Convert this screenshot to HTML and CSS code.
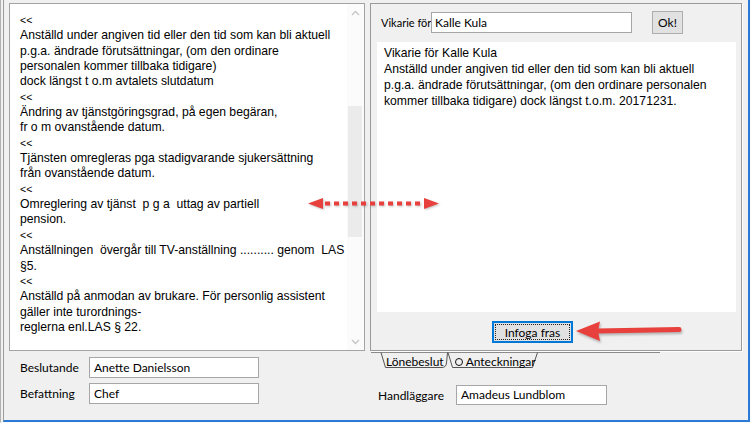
FILE: index.html
```html
<!DOCTYPE html>
<html lang="sv">
<head>
<meta charset="utf-8">
<title>Fraser</title>
<link rel="stylesheet" href="styles.css">
</head>
<body>
<div class="window">
  <div class="inner">
    <div class="cols">
      <div class="col col-left">
        <div class="editor">
          <div class="editor-text">
            <div class="ln mark">&lt;&lt;</div>
            <div class="ln">Anställd under angiven tid eller den tid som kan bli aktuell</div>
            <div class="ln">p.g.a. ändrade förutsättningar, (om den ordinare</div>
            <div class="ln">personalen kommer tillbaka tidigare)</div>
            <div class="ln">dock längst t o.m avtalets slutdatum</div>
            <div class="ln mark">&lt;&lt;</div>
            <div class="ln">Ändring av tjänstgöringsgrad, på egen begäran,</div>
            <div class="ln">fr o m ovanstående datum.</div>
            <div class="ln mark">&lt;&lt;</div>
            <div class="ln">Tjänsten omregleras pga stadigvarande sjukersättning</div>
            <div class="ln">från ovanstående datum.</div>
            <div class="ln mark">&lt;&lt;</div>
            <div class="ln">Omreglering av tjänst  p g a  uttag av partiell</div>
            <div class="ln">pension.</div>
            <div class="ln mark">&lt;&lt;</div>
            <div class="ln">Anställningen  övergår till TV-anställning .......... genom  LAS</div>
            <div class="ln">§5.</div>
            <div class="ln mark">&lt;&lt;</div>
            <div class="ln">Anställd på anmodan av brukare. För personlig assistent</div>
            <div class="ln">gäller inte turordnings-</div>
            <div class="ln">reglerna enl.LAS § 22.</div>
          </div>
          <div class="scrollbar">
            <div class="sb-btn">
              <svg width="9" height="6" viewBox="0 0 9 6"><path d="M1 5 L4.5 1.5 L8 5" fill="none" stroke="#c4c4c4" stroke-width="1.3"/></svg>
            </div>
            <div class="sb-track"><div class="sb-thumb"></div></div>
            <div class="sb-btn">
              <svg width="9" height="6" viewBox="0 0 9 6"><path d="M1 1 L4.5 4.5 L8 1" fill="none" stroke="#c4c4c4" stroke-width="1.3"/></svg>
            </div>
          </div>
        </div>
        <div class="fields">
          <div class="field">
            <span class="label lbl-left">Beslutande</span>
            <div class="input in-left">Anette Danielsson</div>
          </div>
          <div class="field">
            <span class="label lbl-left">Befattning</span>
            <div class="input in-left">Chef</div>
          </div>
        </div>
      </div>

      <div class="col col-right">
        <div class="page">
          <div class="topbar">
            <span class="label small">Vikarie för</span>
            <div class="input in-vik">Kalle Kula</div>
            <div class="btn btn-ok">Ok!</div>
          </div>
          <div class="preview">
            <div class="ln2">Vikarie för Kalle Kula</div>
            <div class="ln2">Anställd under angiven tid eller den tid som kan bli aktuell</div>
            <div class="ln2">p.g.a. ändrade förutsättningar, (om den ordinare personalen</div>
            <div class="ln2">kommer tillbaka tidigare) dock längst t.o.m. 20171231.</div>
          </div>
          <div class="actions">
            <div class="btn btn-focus"><span class="focus-ring">Infoga fras</span></div>
          </div>
        </div>
        <div class="tabs">
          <svg class="tab-shapes" width="290" height="17" viewBox="0 0 290 17">
            <path d="M0 0.5 H289" stroke="#8a8a8a" fill="none"/>
            <path d="M10 0.5 L14.5 15.5 H71 Q75 15.5 75.5 11 L76.5 0.5" stroke="#555" fill="none"/>
            <path d="M77 0.5 L81.5 15.5 H161.5 L166.5 0.5" stroke="#555" fill="none"/>
          </svg>
          <span class="tab tab-1">Lönebeslut</span>
          <span class="tab tab-2"><span class="radio"></span>Anteckningar</span>
        </div>
        <div class="field field-hl">
          <span class="label lbl-right">Handläggare</span>
          <div class="input in-right">Amadeus Lundblom</div>
        </div>
      </div>
    </div>
  </div>

  <svg class="arrow-dotted" width="136" height="16" viewBox="0 0 136 16">
    <polygon points="2,7.5 17,2 17,13" fill="#e8403c"/>
    <rect x="19" y="5.5" width="5" height="4" fill="#e8403c"/>
    <rect x="28" y="5.5" width="5" height="4" fill="#e8403c"/>
    <rect x="37" y="5.5" width="5" height="4" fill="#e8403c"/>
    <rect x="46" y="5.5" width="5" height="4" fill="#e8403c"/>
    <rect x="55" y="5.5" width="5" height="4" fill="#e8403c"/>
    <rect x="64" y="5.5" width="5" height="4" fill="#e8403c"/>
    <rect x="73" y="5.5" width="5" height="4" fill="#e8403c"/>
    <rect x="82" y="5.5" width="5" height="4" fill="#e8403c"/>
    <rect x="91" y="5.5" width="5" height="4" fill="#e8403c"/>
    <rect x="100" y="5.5" width="5" height="4" fill="#e8403c"/>
    <rect x="109" y="5.5" width="5" height="4" fill="#e8403c"/>
    <polygon points="118,2 133,7.5 118,13" fill="#e8403c"/>
  </svg>

  <svg class="arrow-solid" width="112" height="28" viewBox="0 0 112 28">
    <path d="M24 13 L106 11.5" stroke="#e8403c" stroke-width="5" stroke-linecap="round" fill="none"/>
    <polygon points="3,13 27,3.5 25,13 27,23" fill="#e8403c"/>
  </svg>
</div>
</body>
</html>
```

FILE: styles.css
```css
html, body {
  margin: 0;
  padding: 0;
  background: #f0f0f0;
}

body {
  font-family: "Liberation Sans", Arial, sans-serif;
  color: #000;
}

.window {
  position: relative;
  width: 751px;
  height: 423px;
  box-sizing: border-box;
  border-left: 1px solid #b0b0b0;
  border-right: 1px solid #fafafa;
  border-bottom: 1px solid #fafafa;
  background: #f0f0f0;
  overflow: hidden;
}

.inner {
  margin-left: 2px;
  height: 422px;
  box-sizing: border-box;
  border-left: 1px solid #9c9c9c;
  border-right: 2px solid #2b7bd6;
  border-bottom: 2px solid #2b7bd6;
  padding: 3px 6px 0 5px;
}

.cols {
  display: flex;
  gap: 5px;
}

.col-left {
  width: 356px;
}

.col-right {
  width: 372px;
}

/* ---------- left editor ---------- */
.editor {
  height: 348px;
  box-sizing: border-box;
  border: 1px solid #a3a3a3;
  background: #fff;
  display: flex;
}

.editor-text {
  flex: 1;
  padding: 9px 0 0 10px;
  font-size: 12.2px;
  line-height: 15.35px;
}

.ln, .ln2 {
  white-space: pre;
}

.mark {
  font-size: 10.5px;
}

.scrollbar {
  width: 17px;
  display: flex;
  flex-direction: column;
  background: #fbfbfb;
}

.sb-btn {
  height: 17px;
  display: flex;
  align-items: center;
  justify-content: center;
}

.sb-track {
  flex: 1;
  padding-top: 85px;
}

.sb-thumb {
  height: 131px;
  margin: 0 2px 0 1px;
  background: #ebebeb;
}

/* ---------- form fields ---------- */
.label {
  font-family: "Lato", "Noto Sans", sans-serif;
  font-size: 12px;
  white-space: nowrap;
  flex-shrink: 0;
}

.fields {
  display: flex;
  flex-direction: column;
  gap: 5px;
  margin-top: 6px;
  padding-left: 11px;
}

.field {
  display: flex;
  align-items: center;
}

.lbl-left {
  width: 69px;
}

.input {
  box-sizing: border-box;
  height: 21px;
  border: 1px solid #a6a6a6;
  background: #fff;
  font-family: "Lato", "Noto Sans", sans-serif;
  font-size: 12px;
  line-height: 19px;
  padding-left: 4px;
  flex-shrink: 0;
}

.in-left {
  width: 170px;
}

/* ---------- right page ---------- */
.page {
  height: 348px;
  box-sizing: border-box;
  border: 1px solid #9a9a9a;
  box-shadow: 1px 1px 0 #fdfdfd;
  padding: 7px 5px 0 6px;
}

.topbar {
  display: flex;
  align-items: center;
  height: 23px;
  padding-left: 4px;
}

.small {
  font-size: 11px;
  width: 50px;
}

.in-vik {
  width: 201px;
  padding-left: 3px;
}

.btn {
  box-sizing: border-box;
  background: #e1e1e1;
  border: 1px solid #adadad;
  font-family: "Lato", "Noto Sans", sans-serif;
  font-size: 12px;
  display: flex;
  align-items: center;
  justify-content: center;
  flex-shrink: 0;
}

.btn-ok {
  margin-left: 20px;
  width: 31px;
  height: 23px;
}

.preview {
  margin-top: 8px;
  height: 270px;
  width: 359px;
  box-sizing: border-box;
  background: #fff;
  padding: 3px 0 0 7px;
  font-size: 12.2px;
  line-height: 16px;
}

.actions {
  display: flex;
  padding: 9px 0 0 115px;
}

.btn-focus {
  width: 81px;
  height: 22px;
  border: 1px solid #0078d7;
  box-shadow: inset 0 0 0 1px #0078d7;
  padding: 2px;
}

.focus-ring {
  flex: 1;
  align-self: stretch;
  display: flex;
  align-items: center;
  justify-content: center;
  outline: 1px dotted #222;
  outline-offset: -1px;
}

/* ---------- tabs ---------- */
.tabs {
  position: relative;
  margin: 1px 0 0 1px;
  height: 17px;
  display: flex;
  align-items: center;
  font-family: "Lato", "Noto Sans", sans-serif;
  font-size: 12px;
}

.tab-shapes {
  position: absolute;
  left: 0;
  top: 0;
}

.tab {
  position: relative;
  display: flex;
  align-items: center;
  padding-top: 2px;
}

.tab-1 {
  margin-left: 15px;
}

.tab-2 {
  margin-left: 11px;
}

.radio {
  width: 6px;
  height: 6px;
  border: 1px solid #111;
  border-radius: 50%;
  margin-right: 3px;
}

.field-hl {
  margin-top: 16px;
  padding-left: 8px;
}

.lbl-right {
  width: 78px;
}

.in-right {
  width: 151px;
  height: 20px;
  line-height: 18px;
}

/* ---------- annotation arrows ---------- */
.arrow-dotted {
  position: absolute;
  left: 305px;
  top: 196px;
  filter: drop-shadow(1px 1px 1px rgba(0, 0, 0, 0.25));
}

.arrow-solid {
  position: absolute;
  left: 572px;
  top: 318px;
  filter: drop-shadow(1px 2px 1px rgba(0, 0, 0, 0.25));
}
```
